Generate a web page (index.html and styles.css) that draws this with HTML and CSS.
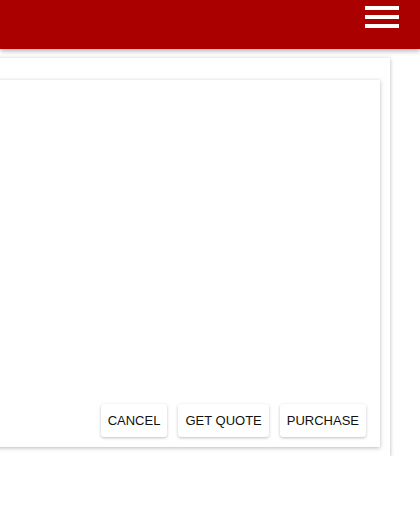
FILE: index.html
```html
<!DOCTYPE html>
<html lang="en">
<head>
    <meta charset="UTF-8">
    <meta name="viewport" content="width=device-width, initial-scale=1.0">
    <title>Quote</title>
    <link rel="stylesheet" href="styles.css">
</head>
<body>
    <header class="topbar">
        <button class="menu-btn" aria-label="Menu">
            <svg width="34" height="22" viewBox="0 0 34 22">
                <rect x="0" y="0" width="34" height="4" fill="#fff"/>
                <rect x="0" y="9" width="34" height="4" fill="#fff"/>
                <rect x="0" y="18" width="34" height="4" fill="#fff"/>
            </svg>
        </button>
    </header>

    <main class="page">
        <section class="panel">
            <div class="card">
                <div class="card-body"></div>
                <div class="actions">
                    <button class="btn">Cancel</button>
                    <button class="btn">Get Quote</button>
                    <button class="btn">Purchase</button>
                </div>
            </div>
        </section>
    </main>
</body>
</html>
```

FILE: styles.css
```css
:root {
    --primary: #aa0000;
    --text: #111111;
}

* {
    margin: 0;
    padding: 0;
    box-sizing: border-box;
    font-family: 'Liberation Sans', Arial, sans-serif;
}

body {
    background: #ffffff;
    color: var(--text);
    overflow: hidden;
}

.topbar {
    height: 49px;
    background: var(--primary);
    display: flex;
    justify-content: flex-end;
    align-items: flex-start;
    padding: 6px 21px 0 0;
    box-shadow: 0 2px 5px rgba(0,0,0,0.3);
    position: relative;
    z-index: 2;
}

.menu-btn {
    background: none;
    border: none;
    display: block;
    line-height: 0;
    cursor: pointer;
}

.page {
    padding-top: 9px;
}

.panel {
    width: 420px;
    margin-left: -30px;
    background: #ffffff;
    padding: 22px 10px 9px 10px;
    box-shadow: 0 1px 4px rgba(0,0,0,0.3);
}

.card {
    height: 367px;
    background: #ffffff;
    display: flex;
    flex-direction: column;
    box-shadow: 0 1px 4px rgba(0,0,0,0.28);
}

.card-body {
    flex: 1;
}

.actions {
    display: flex;
    justify-content: flex-end;
    gap: 11px;
    padding: 0 14px 10px 0;
}

.btn {
    height: 33px;
    padding: 0 7px;
    background: #ffffff;
    border: none;
    border-radius: 3px;
    font-size: 13px;
    text-transform: uppercase;
    color: var(--text);
    box-shadow: 0 1px 3px rgba(0,0,0,0.25);
    cursor: pointer;
}
```
